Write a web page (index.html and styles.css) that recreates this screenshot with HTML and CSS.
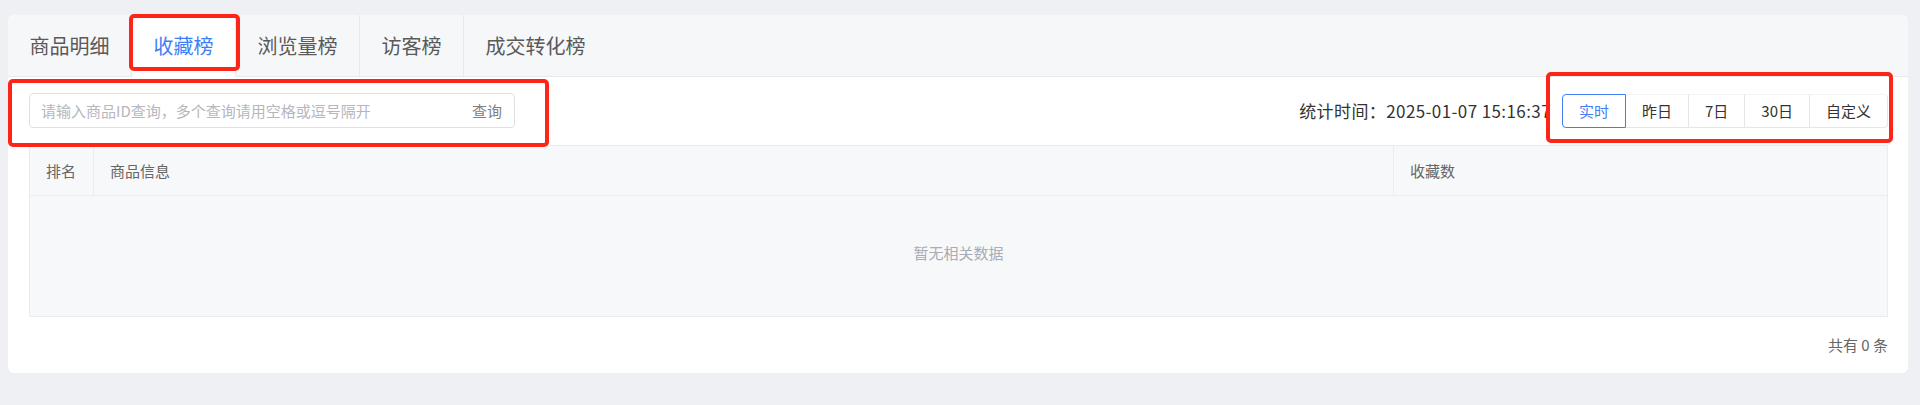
FILE: index.html
```html
<!DOCTYPE html>
<html lang="zh-CN">
<head>
  <meta charset="utf-8">
  <title>商品榜单</title>
  <link rel="stylesheet" href="styles.css">
</head>
<body>
  <div class="card">
    <ul class="tabs">
      <li class="tab">商品明细</li>
      <li class="tab active">收藏榜</li>
      <li class="tab">浏览量榜</li>
      <li class="tab">访客榜</li>
      <li class="tab">成交转化榜</li>
    </ul>

    <div class="panel">
      <div class="toolbar">
        <div class="search">
          <input type="text" placeholder="请输入商品ID查询，多个查询请用空格或逗号隔开">
          <span class="search-btn">查询</span>
        </div>
        <div class="stat">
          <span class="stat-time">统计时间：2025-01-07 15:16:37</span>
          <div class="range">
            <button class="active">实时</button>
            <button>昨日</button>
            <button>7日</button>
            <button>30日</button>
            <button>自定义</button>
          </div>
        </div>
      </div>

      <table class="rank-table">
        <thead>
          <tr>
            <th class="col-rank">排名</th>
            <th class="col-info">商品信息</th>
            <th>收藏数</th>
          </tr>
        </thead>
        <tbody>
          <tr>
            <td class="empty" colspan="3">暂无相关数据</td>
          </tr>
        </tbody>
      </table>

      <div class="pager">共有 0 条</div>
    </div>
  </div>

  <!-- 标注框 -->
  <div class="mark mark-tab"></div>
  <div class="mark mark-search"></div>
  <div class="mark mark-range"></div>
</body>
</html>
```

FILE: styles.css
```css
body {
  margin: 0;
  padding: 15px 12px 0 8px;
  background-color: #eef0f3;
  font-family: "Noto Sans CJK SC", "Noto Sans", sans-serif;
  color: #333;
  height: 390px;
  position: relative;
}

.card {
  background-color: #ffffff;
  border-radius: 6px;
  overflow: hidden;
}

.tabs {
  list-style: none;
  margin: 0;
  padding: 0;
  display: flex;
  background-color: #f6f7f9;
  border-bottom: 1px solid #e7e9ec;
}

.tab {
  padding: 0 21.5px;
  font-size: 20px;
  line-height: 61px;
  color: #5a5a5a;
  border-right: 1px solid #e7e9ec;
}

.tab:last-child {
  border-right: none;
}

.tab.active {
  background-color: #ffffff;
  color: #3f7ef6;
  margin-bottom: -1px;
  border-bottom: 1px solid #ffffff;
}

.panel {
  padding: 16px 20px 18px 21px;
}

.toolbar {
  display: flex;
  justify-content: space-between;
  align-items: center;
}

.search {
  display: flex;
  align-items: center;
  width: 484px;
  height: 33px;
  border: 1px solid #dfe1e6;
  border-radius: 4px;
}

.search input {
  flex: 1;
  border: none;
  outline: none;
  padding: 0 0 0 11px;
  font-family: inherit;
  font-size: 15px;
  color: #333;
  background: transparent;
}

.search input::placeholder {
  color: #b4b7bd;
}

.search-btn {
  font-size: 15px;
  color: #808080;
  padding: 0 12px 0 20px;
}

.stat {
  display: flex;
  align-items: center;
  gap: 11px;
}

.stat-time {
  font-size: 17px;
  letter-spacing: 0.4px;
  color: #333;
}

.range {
  display: flex;
}

.range button {
  height: 34px;
  padding: 0 16px;
  font-family: inherit;
  font-size: 15px;
  color: #333;
  background-color: #ffffff;
  border: none;
  border-top: 1px solid #f3f4f6;
  border-bottom: 1px solid #e4e6ea;
  border-right: 1px solid #e4e6ea;
}

.range button:last-child {
  border-radius: 0 4px 4px 0;
}

.range button.active {
  color: #3f7ef6;
  border: 1px solid #3f7ef6;
  border-radius: 4px 0 0 4px;
}

.rank-table {
  width: 100%;
  margin-top: 17px;
  border-collapse: collapse;
  background-color: #f7f8fa;
  border: 1px solid #eaecef;
}

.rank-table th {
  height: 49px;
  padding: 0 16px;
  text-align: left;
  font-weight: normal;
  font-size: 15px;
  color: #666;
  border-bottom: 1px solid #eaecef;
  border-right: 1px solid #eaecef;
}

.rank-table .col-rank {
  width: 31px;
}

.rank-table .col-info {
  width: 1267px;
}

.rank-table .empty {
  height: 112px;
  padding: 0 0 8px;
  text-align: center;
  font-size: 15px;
  color: #a9acb2;
}

.pager {
  text-align: right;
  margin-top: 18px;
  font-size: 15px;
  line-height: 20px;
  color: #666;
}

.mark {
  position: absolute;
  border: 4px solid #ff2418;
  border-radius: 5px;
  box-sizing: border-box;
}

.mark-tab {
  left: 129px;
  top: 14px;
  width: 111px;
  height: 57px;
}

.mark-search {
  left: 8px;
  top: 79px;
  width: 541px;
  height: 68px;
}

.mark-range {
  left: 1546px;
  top: 72px;
  width: 347px;
  height: 71px;
}
```
